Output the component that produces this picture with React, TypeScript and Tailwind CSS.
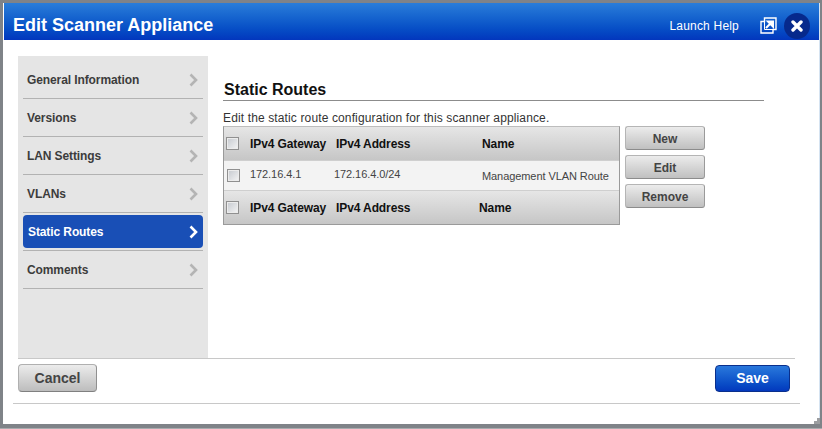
import React from "react";

const navItems = ["General Information", "Versions", "LAN Settings", "VLANs", "Static Routes", "Comments"];

const Chevron = ({ active }: { active?: boolean }) => (
  <svg width="9" height="14" viewBox="0 0 9 14" className="shrink-0">
    <path d="M1.5 1.5 L7 7 L1.5 12.5" fill="none" stroke={active ? "#ffffff" : "#b4b4b4"} strokeWidth="2.6" />
  </svg>
);

const Check = () => (
  <span className="block w-[13px] h-[13px] border border-[#909090] bg-gradient-to-br from-[#c5c9cf] to-[#f5f5f5] shadow-[inset_0_0_0_1px_#ececec] shrink-0" />
);

const GrayButton = ({ label }: { label: string }) => (
  <button className="w-[80px] h-[24px] pt-px rounded-[3px] border border-[#b5b5b5] border-b-[#8c8c8c] border-r-[#9a9a9a] bg-gradient-to-b from-[#ececec] to-[#c0c0c0] text-[12px] font-bold text-[#444444]">
    {label}
  </button>
);

const HeaderRow = ({ nameClass, height }: { nameClass: string; height: string }) => (
  <div className={`flex items-center bg-gradient-to-b from-[#e6e6e6] to-[#c6c6c6] pl-[2px] tracking-[-0.1px] ${height}`}>
    <Check />
    <span className="ml-[11px] w-[86px] text-[12px] font-bold text-[#111111]">IPv4 Gateway</span>
    <span className={`text-[12px] font-bold text-[#111111] ${nameClass}`}>IPv4 Address</span>
    <span className="text-[12px] font-bold text-[#111111]">Name</span>
  </div>
);

export default function App() {
  return (
    <div className="w-[822px] h-[429px] bg-[#a9abae]">
      <div className="relative w-[822px] h-[428px] bg-white border-l-[3px] border-r-[2px] border-t-[3px] border-b-[4px] border-[#7f8388] shadow-[inset_-1px_0_0_#d6e4f2] flex flex-col font-['Liberation_Sans',Arial,sans-serif] overflow-hidden">
        {/* Title bar */}
        <div className="h-[37px] ml-px mr-px pt-[8px] flex items-center bg-gradient-to-b from-[#2a7dd9] to-[#0336bd] shrink-0">
          <h1 className="ml-[9px] text-[18px] font-bold text-white">Edit Scanner Appliance</h1>
          <span className="ml-auto text-[12px] tracking-[0.2px] text-white">Launch Help</span>
          <svg width="17" height="17" viewBox="0 0 17 17" className="ml-[21px]">
            <path d="M4.5 1 H16 V12.5 H13 V16 H1 V4.5 H4.5 Z" fill="none" stroke="#fff" strokeWidth="1.4" />
            <path d="M4.5 4.5 V12.5 H13" fill="none" stroke="#fff" strokeWidth="1" />
            <path d="M6 11 L11 6 M8 4.5 H13 V9.5 Z" stroke="#fff" strokeWidth="2" fill="#fff" />
          </svg>
          <div className="ml-[7px] mr-[9px] w-[26px] h-[26px] rounded-full bg-[#06298c] flex items-center justify-center">
            <svg width="12" height="12" viewBox="0 0 12 12">
              <path d="M2 2 L10 10 M10 2 L2 10" stroke="#fff" strokeWidth="3.4" strokeLinecap="round" />
            </svg>
          </div>
        </div>

        {/* Body */}
        <div className="flex h-[303px] mt-[16px] ml-[15px] mr-[25px] border-b border-[#c8c8c8] shrink-0">
          <nav className="w-[190px] bg-[#e5e5e5] pt-[5px] px-[5px]">
            {navItems.map((item) => {
              const active = item === "Static Routes";
              return (
                <div key={item} className="h-[38px] border-b border-[#b2b2b2] py-[2px]">
                  <div
                    className={`h-full flex items-center justify-between rounded-[4px] pr-[5px] text-[12px] tracking-[-0.1px] font-bold ${
                      active ? "bg-[#194fb6] text-white pl-[5px]" : "text-[#3c3c3c] pl-[4px]"
                    }`}
                  >
                    {item}
                    <Chevron active={active} />
                  </div>
                </div>
              );
            })}
          </nav>

          <div className="flex-1 pl-[15px] pr-[31px] pt-[24px]">
            <h2 className="h-[21px] border-b border-[#8c8c8c] pl-px text-[16px] leading-[20px] font-bold text-[#111111]">Static Routes</h2>
            <p className="mt-[10px] h-[15px] text-[12px] leading-[15px] tracking-[0.13px] text-[#333333]">Edit the static route configuration for this scanner appliance.</p>
            <div className="flex">
              <div className="w-[397px] h-[99px] border border-[#9a9a9a] border-t-[#bdbdbd]">
                <HeaderRow nameClass="w-[146px]" height="h-[33px]" />
                <div className="h-[31px] flex bg-[#f3f3f3] border-y border-[#cfcfcf] pl-[3px] text-[11px] tracking-[-0.08px] text-[#444444]">
                  <div className="mt-[8px]"><Check /></div>
                  <span className="ml-[10px] w-[84px] mt-[5px]">172.16.4.1</span>
                  <span className="w-[148px] mt-[5px]">172.16.4.0/24</span>
                  <span className="mt-[7px]">Management VLAN Route</span>
                </div>
                <HeaderRow nameClass="w-[143px]" height="h-[33px]" />
              </div>
              <div className="ml-[5px] flex flex-col gap-[5px]">
                <GrayButton label="New" />
                <GrayButton label="Edit" />
                <GrayButton label="Remove" />
              </div>
            </div>
          </div>
        </div>

        {/* Footer */}
        <div className="h-[45px] ml-[10px] mr-[20px] border-b border-[#c8c8c8] shrink-0 flex items-start justify-between pl-[5px] pr-[10px] pt-[5px]">
          <button className="w-[79px] h-[28px] rounded-[4px] border border-[#b0b0b0] border-b-[#808080] border-r-[#909090] bg-gradient-to-b from-[#ececec] to-[#bdbdbd] text-[14px] font-bold text-[#444444]">
            Cancel
          </button>
          <button className="mt-px w-[75px] h-[27px] rounded-[4px] border border-[#0a2f8c] bg-gradient-to-b from-[#2a78dc] to-[#0438bd] text-[14px] font-bold text-white">
            Save
          </button>
        </div>

        {/* Resize grip */}
        <svg width="8" height="8" viewBox="0 0 8 8" className="absolute right-0 bottom-0">
          <path d="M5 2 h3 v3 h-3 Z M2 5 h3 v3 h-3 Z M5 5 h3 v3 h-3 Z" fill="#9c9ea1" />
        </svg>
      </div>
    </div>
  );
}
